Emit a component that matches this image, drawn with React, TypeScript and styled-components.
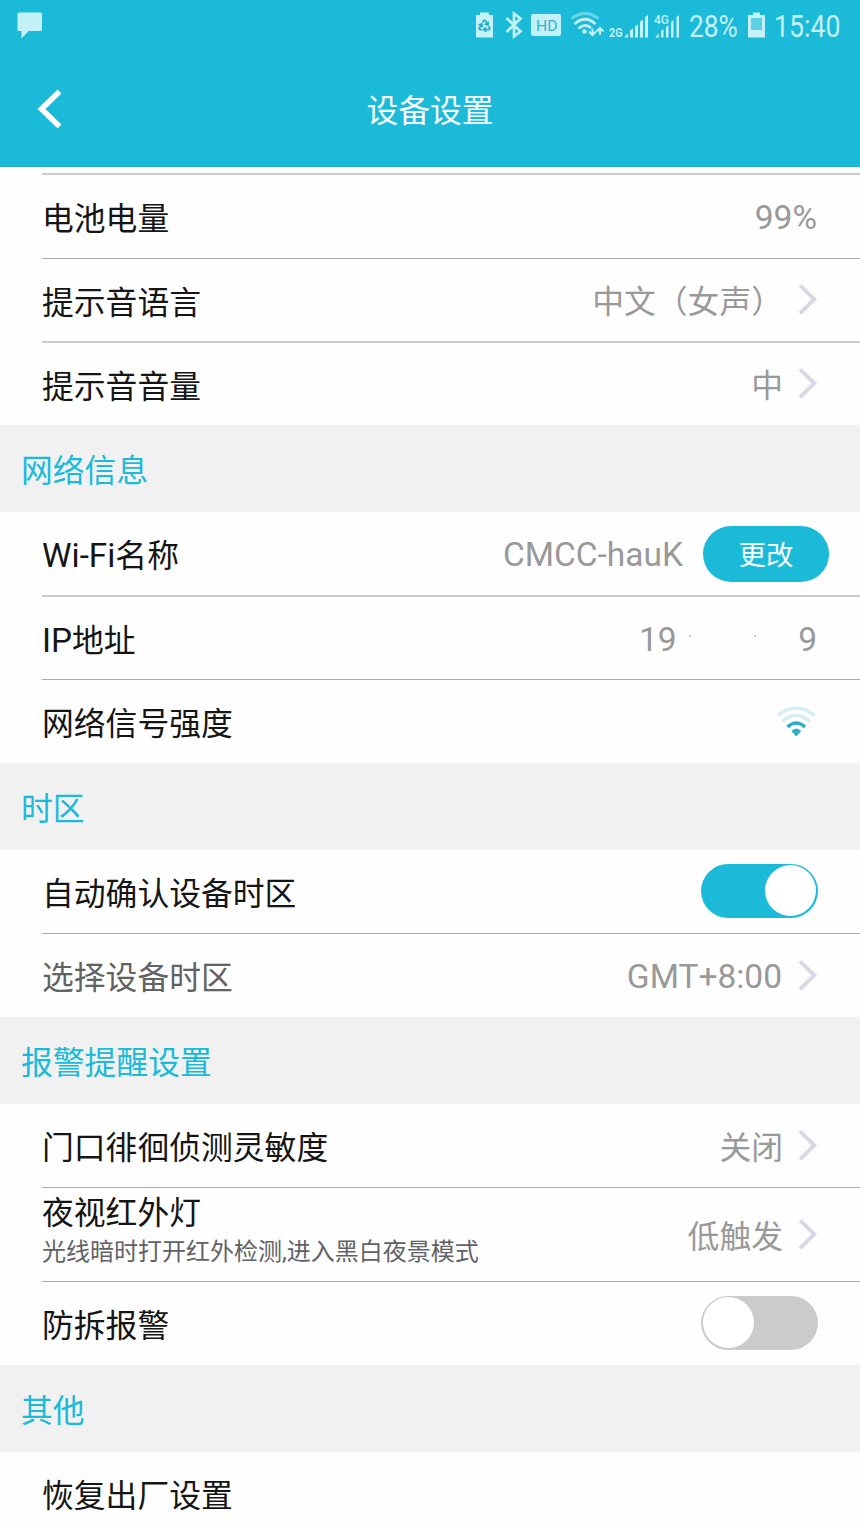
import React from 'react';
import styled, { createGlobalStyle } from 'styled-components';
import { Recycle } from 'lucide-react';

const cyan = '#1bbad9';
const pale = '#c4f0f8';

const GlobalStyle = createGlobalStyle`
  * { box-sizing: border-box; }
  body { margin: 0; background: #fff; }
`;

const Screen = styled.div`
  width: 860px;
  height: 1529px;
  overflow: hidden;
  background: #fefefe;
  color: #151515;
  font-family: Roboto, 'Noto Sans CJK SC', sans-serif;
  font-size: 31.8px;
  line-height: 40px;
  white-space: nowrap;
`;

const Header = styled.header`
  height: 167px;
  background: ${cyan};
  border-bottom: 1px solid #2aa9c4;
`;

const StatusBar = styled.div`
  display: flex;
  height: 52px;
  padding: 0 0 0 17px;
  color: ${pale};
  justify-content: space-between;
`;

const StatusIcons = styled.div`
  display: flex;
  width: 386px;
`;

const StatusText = styled.span<{ $width: number; $scale: number }>`
  flex: none;
  width: ${p => p.$width}px;
  font-size: 31px;
  line-height: 54px;
  transform: scaleX(${p => p.$scale});
  transform-origin: left center;
`;

const NavBar = styled.div`
  display: grid;
  grid-template-columns: 80px 1fr 80px;
  align-items: center;
  height: 114px;
`;

const BackButton = styled.button`
  display: flex;
  justify-content: flex-start;
  border: 0;
  background: none;
  padding: 0 0 0 37px;
  height: 40px;
`;

const Title = styled.h1`
  margin: 0;
  padding-top: 4px;
  font-size: inherit;
  font-weight: 400;
  text-align: center;
  color: #f4fdff;
`;

const Strip = styled.div`
  height: 8px;
  margin-left: 42px;
  border-bottom: 2px solid #cecdce;
`;

const Row = styled.div<{ $height: number; $line?: 'thin' | 'soft'; $right?: number }>`
  display: flex;
  align-items: center;
  justify-content: space-between;
  height: ${p => p.$height}px;
  margin-left: 42px;
  padding-right: ${p => p.$right ?? 42}px;
  border-bottom: ${p => (p.$line ? (p.$line === 'thin' ? '1px solid #ababab' : '2px solid #cbcbcb') : '0')};
`;

const Label = styled.span<{ $muted?: boolean }>`
  padding-top: 5px;
  color: ${p => (p.$muted ? '#626262' : 'inherit')};
`;

const LabelLatin = styled.span`
  font-size: 33.3px;
`;

const LabelStack = styled.div`
  display: flex;
  flex-direction: column;
  height: 93px;
  padding-top: 5px;
`;

const Hint = styled.span`
  font-size: 24px;
  line-height: 34px;
  margin-top: 2px;
  color: #626266;
`;

const ValueGroup = styled.div<{ $gap?: number }>`
  display: flex;
  align-items: center;
  gap: ${p => p.$gap ?? 16}px;
`;

const Value = styled.span`
  padding-top: 4px;
  color: #999;
`;

const Latin = styled(Value)`
  padding-top: 3px;
  margin-right: 1px;
  font-size: 33.5px;
`;

const Address = styled(Latin)`
  display: flex;
  width: 178px;
`;

const Trace = styled.i<{ $after: number }>`
  width: 2px;
  height: 2px;
  margin-top: 15px;
  margin-right: ${p => p.$after}px;
  background: #c4c4c4;
`;

const AddressStart = styled.span`
  width: 51px;
`;

const ChangeButton = styled.button`
  width: 126px;
  height: 56px;
  border: 0;
  border-radius: 28px;
  padding: 4px 0 0;
  background: ${cyan};
  color: #f4fdff;
  font: inherit;
  font-size: 27.5px;
`;

const Toggle = styled.div<{ $on?: boolean }>`
  display: flex;
  justify-content: ${p => (p.$on ? 'flex-end' : 'flex-start')};
  align-items: center;
  width: 117px;
  height: 54px;
  margin-bottom: 2px;
  padding: 0 2px;
  border-radius: 27px;
  background: ${p => (p.$on ? cyan : '#cbcbcb')};
`;

const Knob = styled.div`
  width: 51px;
  height: 51px;
  border-radius: 50%;
  background: #fff;
`;

const SectionTitle = styled.h2`
  height: 87px;
  margin: 0;
  padding: 3px 0 0 21px;
  background: #f1f1f1;
  color: ${cyan};
  font-size: inherit;
  font-weight: 400;
  line-height: 86px;
`;

const Chevron = () => (
  <svg width="19" height="34" viewBox="0 0 19 34" fill="none" stroke="#d6d9e5" strokeWidth="4">
    <path d="M1 2.300 15.200 16.300 1 30.300" />
  </svg>
);

const WifiStrength = () => (
  <svg width="42" height="34" viewBox="0 0 42 34" fill="none" strokeWidth="3.400">
    <path d="M2 10.500Q20.300-4.500 38.600 10.500M6.500 16.500Q20.300 4.500 34 16.500" stroke="#d4eef3" />
    <path d="M11.500 22Q20.300 14 29 22" stroke="#2eafc8" />
    <path d="M15.300 26Q20.300 21 25.300 26L20.300 31.500Z" fill="#2eafc8" />
  </svg>
);

const MessageIcon = () => (
  <svg width="27" height="42" viewBox="0 0 27 42" fill={pale}>
    <path d="M2 12.500h21.500q1.500 0 1.500 1.500v15.500q0 1.500-1.500 1.500H11.500L4.500 38.500V31H2q-1.500 0-1.500-1.500V14q0-1.500 1.500-1.500Z" />
  </svg>
);

const SystemIcons = () => (
  <svg width="215" height="52" viewBox="474 0 215 52" fill={pale}>
    <path d="M480 12.500h9V15h4v22.500h-17V15h4z" />
    <Recycle x={477.5} y={18.5} width={14} height={14} color="#20b0ca" strokeWidth={3} />
    <path d="M506.500 18l14 13.500-6.500 5V13.500l6.500 5-14 13.500" fill="none" stroke={pale} strokeWidth="2.700" />
    <rect x="531" y="14" width="30" height="22" rx="2" />
    <text x="536" y="30.500" fontSize="15" textLength="21.500" lengthAdjust="spacingAndGlyphs" fill="#35b5cd">HD</text>
    <g fill="none" stroke={pale} strokeWidth="2.800">
      <path d="M571.500 18.500Q585 8.500 598.500 18.500" stroke="#68d7ea" />
      <path d="M574.500 24Q585 14.500 595.500 24M578.500 28.500Q585 22.500 591 28" />
    </g>
    <circle cx="584.500" cy="31.500" r="2.300" />
    <path d="M592.500 28.500v6M589 31.500l3.500 3.500 3.500-3.500M600 35v-6M596.500 31.500l3.500-3.500 3.500 3.500" fill="none" stroke={pale} strokeWidth="2" />
    <text x="609" y="37" fontSize="12" fontWeight="700" textLength="13.500" lengthAdjust="spacingAndGlyphs">2G</text>
    <path d="M624 37.500l4-4v4zM630 30.500l3-2v9h-3zM635 26.500l3-2v13h-3zM640 21.500l3-2v18h-3zM645 17l3-2v22.500h-3z" />
    <text x="654" y="24" fontSize="12.500" fontWeight="500" textLength="15" lengthAdjust="spacingAndGlyphs">4G</text>
    <path d="M655 37.500l4-4v4zM661 31l2.500-2v8.500H661zM666 27l2.500-2v12.500H666zM671 22l2.500-2v17.500H671zM676.500 17l2.500-2v22.500h-2.500z" />
  </svg>
);

const BatteryIcon = () => (
  <svg width="26" height="52" viewBox="0 0 26 52">
    <path d="M5 12.500h7V15h5v22.500H0V15h5z" fill={pale} />
    <path d="M3 18h11v12H3z" fill="#5dd0e2" />
  </svg>
);

export default function App() {
  return (
    <Screen>
      <GlobalStyle />
      <Header>
        <StatusBar>
          <MessageIcon />
          <StatusIcons>
            <SystemIcons />
            <StatusText $width={59} $scale={0.85}>28%</StatusText>
            <BatteryIcon />
            <StatusText $width={86} $scale={0.86}>15:40</StatusText>
          </StatusIcons>
        </StatusBar>
        <NavBar>
          <BackButton aria-label="返回">
            <svg width="26" height="40" viewBox="0 0 26 40" fill="none" stroke="#fff" strokeWidth="5.500">
              <path d="M22.500 2.500 4.500 20l18 17.500" />
            </svg>
          </BackButton>
          <Title>设备设置</Title>
        </NavBar>
      </Header>
      <main>
        <Strip />
        <Row $height={84} $line="thin">
          <Label>电池电量</Label>
          <Latin>99%</Latin>
        </Row>
        <Row $height={84} $line="soft">
          <Label>提示音语言</Label>
          <ValueGroup><Value>中文（女声）</Value><Chevron /></ValueGroup>
        </Row>
        <Row $height={82}>
          <Label>提示音音量</Label>
          <ValueGroup><Value>中</Value><Chevron /></ValueGroup>
        </Row>

        <SectionTitle>网络信息</SectionTitle>
        <Row $height={85} $line="soft" $right={31}>
          <Label><LabelLatin>Wi-Fi</LabelLatin>名称</Label>
          <ValueGroup $gap={19}><Latin>CMCC-hauK</Latin><ChangeButton>更改</ChangeButton></ValueGroup>
        </Row>
        <Row $height={83} $line="thin">
          <Label><LabelLatin>IP</LabelLatin>地址</Label>
          <Address>
            <AddressStart>19</AddressStart>
            <Trace $after={63} />
            <Trace $after={42} />
            <span>9</span>
          </Address>
        </Row>
        <Row $height={83}>
          <Label>网络信号强度</Label>
          <WifiStrength />
        </Row>

        <SectionTitle>时区</SectionTitle>
        <Row $height={84} $line="thin">
          <Label>自动确认设备时区</Label>
          <Toggle $on><Knob /></Toggle>
        </Row>
        <Row $height={83}>
          <Label $muted>选择设备时区</Label>
          <ValueGroup><Latin>GMT+8:00</Latin><Chevron /></ValueGroup>
        </Row>

        <SectionTitle>报警提醒设置</SectionTitle>
        <Row $height={84} $line="thin">
          <Label>门口徘徊侦测灵敏度</Label>
          <ValueGroup><Value>关闭</Value><Chevron /></ValueGroup>
        </Row>
        <Row $height={94} $line="thin">
          <LabelStack>
            <span>夜视红外灯</span>
            <Hint>光线暗时打开红外检测,进入黑白夜景模式</Hint>
          </LabelStack>
          <ValueGroup><Value>低触发</Value><Chevron /></ValueGroup>
        </Row>
        <Row $height={83}>
          <Label>防拆报警</Label>
          <Toggle><Knob /></Toggle>
        </Row>

        <SectionTitle>其他</SectionTitle>
        <Row $height={83}>
          <Label>恢复出厂设置</Label>
        </Row>
      </main>
    </Screen>
  );
}
